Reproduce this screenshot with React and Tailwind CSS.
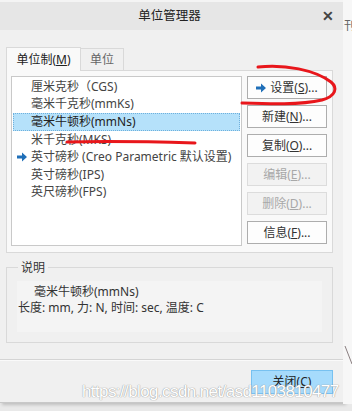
import React from 'react';

const units = [
  { label: '厘米克秒（CGS)' },
  { label: '毫米千克秒(mmKs)' },
  { label: '毫米牛顿秒(mmNs)', selected: true },
  { label: '米千克秒(MKS)' },
  { label: '英寸磅秒 (Creo Parametric 默认设置)', current: true },
  { label: '英寸磅秒(IPS)' },
  { label: '英尺磅秒(FPS)' },
];

function Arrow() {
  return (
    <svg width="10" height="10" viewBox="0 0 10 10">
      <path d="M0 3.5h5V0.5l5 4.5-5 4.5V6.5H0z" fill="#1f6fb8" />
    </svg>
  );
}

function Btn({ children, disabled, icon }) {
  return (
    <div
      className={
        'h-[23px] w-[80px] flex items-center justify-center gap-[4px] border text-[12px] ' +
        (disabled
          ? 'border-[#dcdcdc] bg-[#f2f2f2] text-[#a8a8a8]'
          : 'border-[#adadad] bg-[#fdfdfd] text-[#333]')
      }
    >
      {icon && <Arrow />}
      <span>{children}</span>
    </div>
  );
}

export default function App() {
  return (
    <div className="relative w-[352px] h-[411px] overflow-hidden bg-[#e9e9e9] font-['Noto_Sans','Noto_Sans_CJK_SC',sans-serif]">
      {/* stuff behind the dialog */}
      <div className="absolute left-0 top-0 w-[352px] h-[2px] bg-[#f4f4f4]" />
      <div className="absolute right-0 top-0 w-[9px] h-[404px] bg-[#f7f7f7]" />
      <span className="absolute left-[344px] top-[17px] text-[12px] text-[#666]">刊</span>
      <svg className="absolute left-[344px] top-[344px]" width="8" height="22">
        <line x1="1" y1="2" x2="8" y2="20" stroke="#8a7f80" strokeWidth="1" />
      </svg>

      <div className="mt-[2px] w-[344px] h-[401px] flex flex-col bg-[#f0f0f0] border-r border-b border-[#c8c8c8] shadow-[2px_2px_3px_rgba(0,0,0,0.18)]">
        <div className="h-[28px] flex items-center bg-[#e6e6e6]">
          <div className="w-[30px]" />
          <div className="flex-1 text-center text-[12.5px] text-[#222] pr-[4px]">单位管理器</div>
          <div className="w-[30px] pl-[9px] pr-[6px] text-[14px] font-bold text-[#444] leading-none">✕</div>
        </div>

        <div className="px-[6px] pt-[16px]">
          <div className="flex items-end h-[24px] text-[12px]">
            <div className="relative z-10 w-[75px] h-[24px] mb-[-1px] flex items-center justify-center border border-b-0 border-[#d9d9d9] bg-[#f9f9f9] text-[#222]">
              单位制(<span className="underline">M</span>)
            </div>
            <div className="w-[43px] h-[22px] flex items-center justify-center border border-l-0 border-b-0 border-[#d9d9d9] bg-[#f0f0f0] text-[#666]">
              单位
            </div>
          </div>
          <div className="w-[327px] h-[183px] border border-[#d9d9d9] bg-[#f9f9f9] flex pt-[5px] pl-[4px]">
            <div className="w-[231px] h-[170px] border border-[#c9c9c9] bg-white pt-[1px] pl-[1px] pr-[1px]">
              {units.map((u, i) => (
                <div
                  key={i}
                  className={
                    'h-[17.6px] flex items-center text-[12px] whitespace-nowrap overflow-hidden ' +
                    (u.selected ? 'bg-[#b5e1fa] border border-dotted border-[#6fb0dc] text-[#222]' : 'text-[#444]')
                  }
                >
                  <div className={u.selected ? 'w-[3px]' : 'w-[4px]'} />
                  <div className="w-[14px] flex items-center">{u.current && <Arrow />}</div>
                  <span>{u.label}</span>
                </div>
              ))}
            </div>
            <div className="ml-[5px] flex flex-col gap-[6px]">
              <Btn icon>
                设置(<span className="underline">S</span>)...
              </Btn>
              <Btn>
                新建(<span className="underline">N</span>)...
              </Btn>
              <Btn>
                复制(<span className="underline">O</span>)...
              </Btn>
              <Btn disabled>
                编辑(<span className="underline">E</span>)...
              </Btn>
              <Btn disabled>
                删除(<span className="underline">D</span>)...
              </Btn>
              <Btn>
                信息(<span className="underline">F</span>)...
              </Btn>
            </div>
          </div>

          <div className="relative mt-[14px] w-[327px] h-[76px] border border-[#d9d9d9] pt-[13px] pl-[10px]">
            <span className="absolute left-[11px] top-[-9px] px-[3px] bg-[#f0f0f0] text-[12px] text-[#333]">说明</span>
            <div className="w-[305px] h-[51px] bg-[#f4f4f4] pt-[3px] text-[12px] text-[#333] leading-[16px]">
              <div className="pl-[17px]">毫米牛顿秒(mmNs)</div>
              <div className="pl-[1px]">长度: mm, 力: N, 时间: sec, 温度: C</div>
            </div>
          </div>
        </div>

        <div className="mt-[16px] h-[1px] bg-[#d4d4d4]" />
        <div className="h-[1px] bg-[#fafafa]" />
        <div className="flex justify-end pr-[10px] pt-[9px]">
          <div className="w-[82px] h-[24px] flex items-center justify-center border border-[#77c1f0] bg-[#a6dbfc] text-[12px] text-[#222]">
            关闭(<span className="underline">C</span>)
          </div>
        </div>
      </div>

      {/* watermark */}
      <div className="absolute left-[82px] top-[379px] font-['Liberation_Sans',sans-serif] text-[17px] tracking-[-0.6px] text-white [text-shadow:0_0_1px_#9a9a9a,0_0_1px_#9a9a9a]">
        https://blog.csdn.net/asd1103810477
      </div>

      {/* red pen marks */}
      <svg className="absolute left-0 top-0 pointer-events-none" width="352" height="411">
        <path
          d="M258 67 C285 64 315 70 331 82 C338 88 336 96 322 100 C300 105 270 104 242 103"
          fill="none"
          stroke="#e8161b"
          strokeWidth="3"
          strokeLinecap="round"
        />
        <path d="M67 142 C110 141 160 142 195 143" fill="none" stroke="#e8161b" strokeWidth="3" strokeLinecap="round" />
      </svg>
    </div>
  );
}
